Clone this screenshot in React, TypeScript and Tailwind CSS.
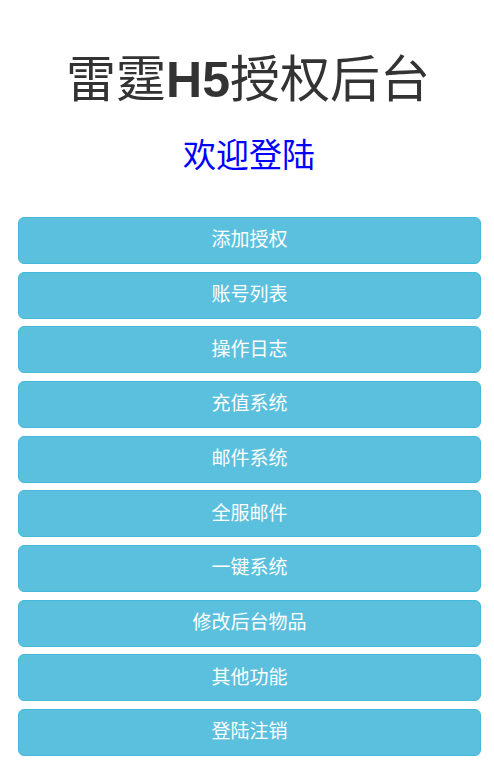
const ITEMS = [
  "添加授权",
  "账号列表",
  "操作日志",
  "充值系统",
  "邮件系统",
  "全服邮件",
  "一键系统",
  "修改后台物品",
  "其他功能",
  "登陆注销",
];

export default function App() {
  return (
    <div
      className="min-h-[784px] bg-white"
      style={{ fontFamily: '"Liberation Sans", "Noto Sans CJK SC", sans-serif' }}
    >
      <h1 className="pt-[54px] h-[107px] text-center text-[50px] leading-[53px] text-[#333] font-normal ml-[2px]">
        雷霆<b className="font-bold">H5</b>授权后台
      </h1>
      <p className="mt-[31px] text-center text-[33px] leading-[36px] text-[#0000ff] ml-[4px]">
        欢迎登陆
      </p>
      <div className="mt-[43px] ml-[18px] w-[463px] flex flex-col gap-[7.67px]">
        {ITEMS.map((label) => (
          <button
            key={label}
            type="button"
            className="h-[47px] w-full rounded-[6px] border border-[#46b8da] bg-[#5bc0de] text-[19px] text-white"
          >
            {label}
          </button>
        ))}
      </div>
    </div>
  );
}
